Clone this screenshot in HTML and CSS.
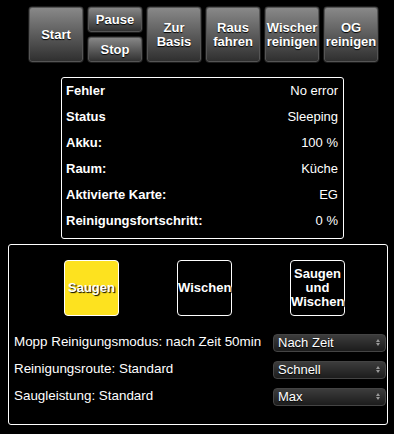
FILE: index.html
```html
<!DOCTYPE html>
<html lang="de">
<head>
    <meta charset="UTF-8">
    <title>Saugroboter</title>
    <link rel="stylesheet" href="styles.css">
</head>
<body>
<div class="aktionen">
    <button class="btn">Start</button>
    <div class="stapel">
        <button class="btn halb">Pause</button>
        <button class="btn halb">Stop</button>
    </div>
    <button class="btn">Zur<br>Basis</button>
    <button class="btn">Raus<br>fahren</button>
    <button class="btn">Wischer<br>reinigen</button>
    <button class="btn">OG<br>reinigen</button>
</div>

<div class="info">
    <div class="zeile"><span class="label">Fehler</span><span>No error</span></div>
    <div class="zeile"><span class="label">Status</span><span>Sleeping</span></div>
    <div class="zeile"><span class="label">Akku:</span><span>100 %</span></div>
    <div class="zeile"><span class="label">Raum:</span><span>Küche</span></div>
    <div class="zeile"><span class="label">Aktivierte Karte:</span><span>EG</span></div>
    <div class="zeile"><span class="label">Reinigungsfortschritt:</span><span>0 %</span></div>
</div>

<div class="panel">
    <div class="modi">
        <button class="modus aktiv">Saugen</button>
        <button class="modus">Wischen</button>
        <button class="modus">Saugen<br>und<br>Wischen</button>
    </div>

    <div class="optionen">
        <span class="text">Mopp Reinigungsmodus: nach Zeit 50min</span>
        <div class="auswahl">
            <select><option>Nach Zeit</option><option>Nach Fläche</option></select>
            <span class="pfeil"></span>
        </div>
        <span class="text">Reinigungsroute: Standard</span>
        <div class="auswahl">
            <select><option>Schnell</option><option>Standard</option></select>
            <span class="pfeil"></span>
        </div>
        <span class="text">Saugleistung: Standard</span>
        <div class="auswahl">
            <select><option>Max</option><option>Standard</option></select>
            <span class="pfeil"></span>
        </div>
    </div>
</div>
</body>
</html>
```

FILE: styles.css
```css
body { margin: 0; padding: 6px 0 0 0; background: #000; color: #fff; font-family: "Liberation Sans", Arial, sans-serif; font-size: 13px; }

.aktionen { display: flex; gap: 3px; margin-left: 28px; }
.btn { width: 56px; height: 57px; padding: 0; border: 1px solid #1c1c1c; border-radius: 4px;
       background: linear-gradient(#8a8a8a, #2e2e2e); color: #fff; font-family: "Liberation Sans", Arial, sans-serif;
       font-size: 13px; font-weight: bold; line-height: 14px; text-shadow: 0 1px 1px #000; box-shadow: inset 0 0 0 1px #555; }
.stapel { display: flex; flex-direction: column; gap: 3px; }
.btn.halb { height: 27px; }

.info { box-sizing: border-box; width: 283px; margin: 14px 0 0 61px; padding: 0 5px 4px 4px; border: 1px solid #fff; border-radius: 3px; }
.zeile { display: flex; justify-content: space-between; height: 26px; line-height: 26px; }
.label { font-weight: bold; }

.panel { box-sizing: border-box; width: 380px; height: 181px; margin: 5px 0 0 8px; border: 1px solid #fff; border-radius: 3px; }
.modi { display: flex; gap: 58px; padding: 15px 0 0 55px; }
.modus { width: 55px; height: 56px; padding: 0; border: 1px solid #fff; border-radius: 4px; background: #000; color: #fff;
         font-family: "Liberation Sans", Arial, sans-serif; font-size: 13px; font-weight: bold; line-height: 14px; text-shadow: 1px 1px 1px #000; }
.modus.aktiv { background: #fde21f; }

.optionen { display: grid; grid-template-columns: 1fr 113px; grid-auto-rows: 27px; align-items: center; margin-top: 13px; padding: 0 1px 0 5px; }
.text { font-size: 13.4px; margin-top: -3px; }
.auswahl { position: relative; }
.auswahl select { appearance: none; -webkit-appearance: none; box-sizing: border-box; width: 113px; height: 18px; margin: 0; padding: 0 0 0 4px;
                  border: 1px solid #444; border-radius: 4px; background: linear-gradient(#3c3c3c, #1c1c1c); color: #fff;
                  font-family: "Liberation Sans", Arial, sans-serif; font-size: 13px; text-shadow: 0 1px 1px #000; }
.pfeil { position: absolute; right: 6px; top: 5px; width: 0; height: 0; border-left: 2px solid transparent; border-right: 2px solid transparent; border-bottom: 3px solid #999; }
.pfeil::after { content: ""; position: absolute; left: -2px; top: 4px; border-left: 2px solid transparent; border-right: 2px solid transparent; border-top: 3px solid #999; }
```
